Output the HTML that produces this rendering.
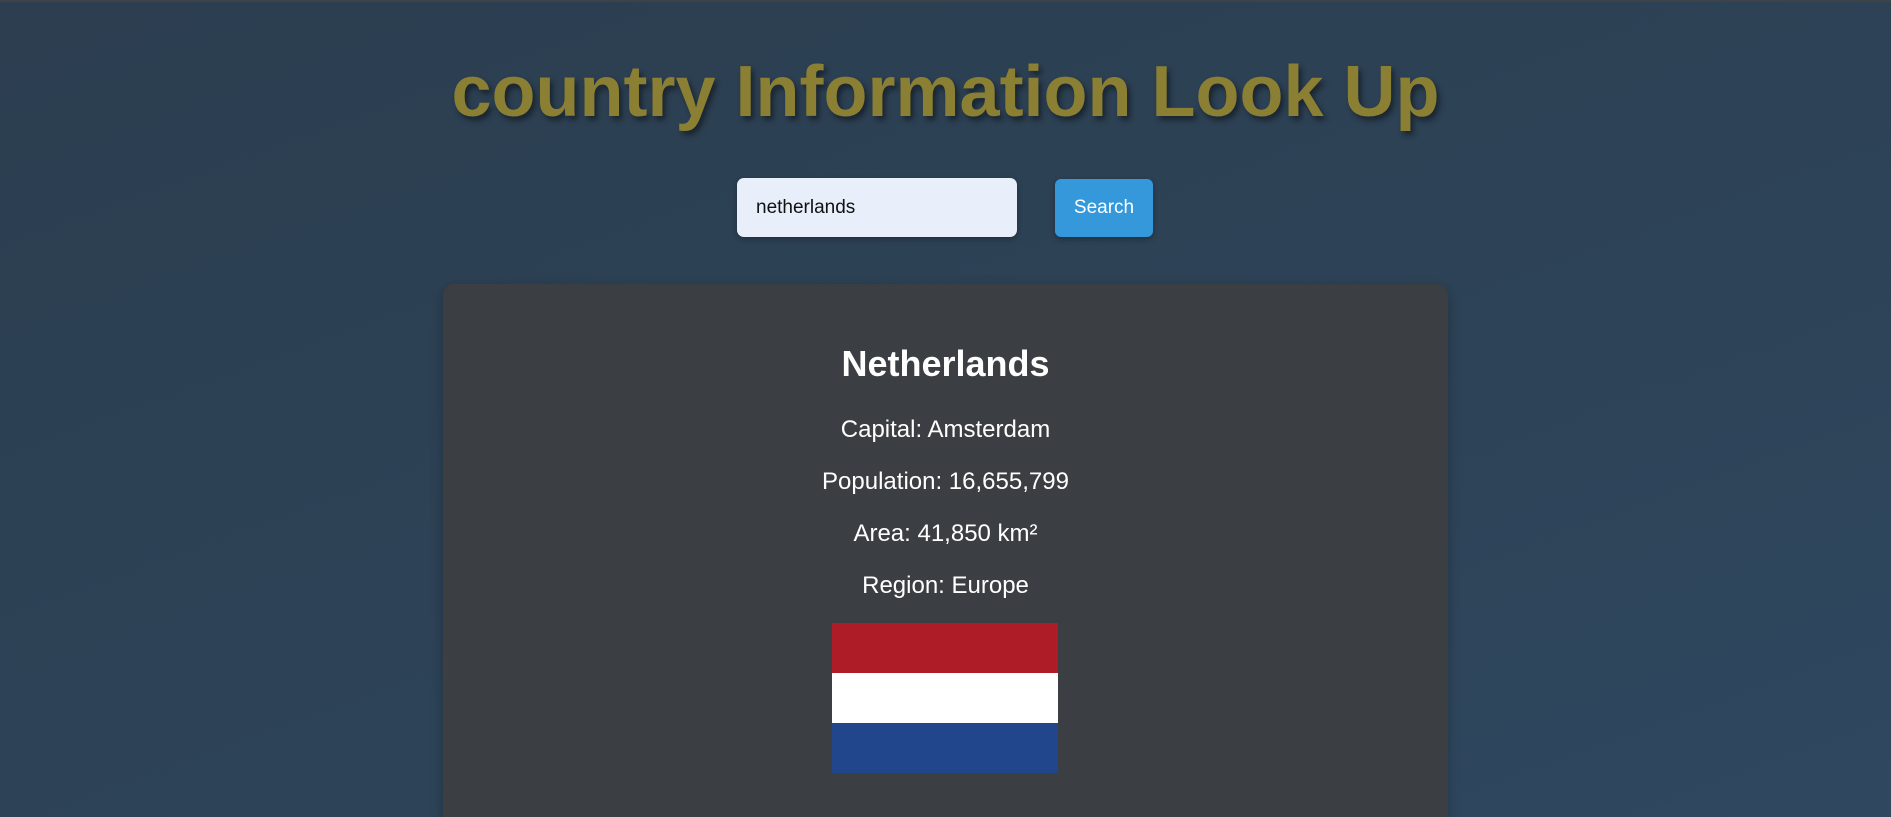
<!DOCTYPE html>
<html><head><meta charset="utf-8"><style>
html,body{margin:0;padding:0;width:1891px;height:817px;overflow:hidden;}
body{background:linear-gradient(160deg,#2c3e50 0%,#2d4357 60%,#2f4860 100%);font-family:"Liberation Sans",Arial,sans-serif;position:relative;border-top:2px solid #3f4347;box-sizing:border-box;}
h1{position:absolute;left:0;width:1891px;top:47px;margin:0;text-align:center;font-size:72px;font-weight:bold;color:#8b7f33;text-shadow:3px 4px 6px rgba(0,0,0,.45);line-height:86px;}
.inp{position:absolute;left:737px;top:176px;width:280px;height:59px;background:#e8effb;border-radius:7px;box-shadow:0 2px 6px rgba(0,0,0,.3);box-sizing:border-box;padding-left:19px;line-height:59px;font-size:19px;color:#111;}
.btn{position:absolute;left:1055px;top:177px;width:98px;height:58px;background:#3498db;border-radius:6px;color:#fff;font-size:19px;line-height:58px;text-align:center;box-shadow:0 2px 6px rgba(0,0,0,.3);}
.card{position:absolute;left:443px;top:282px;width:1005px;height:560px;background:#3b3e42;border-radius:12px;box-shadow:0 4px 12px rgba(0,0,0,.25);color:#fff;text-align:center;}
.card h2{position:absolute;left:0;width:100%;top:58px;margin:0;font-size:36px;line-height:44px;}
.card p{position:absolute;left:0;width:100%;margin:0;font-size:24px;line-height:30px;}
.flag{position:absolute;left:389px;top:339px;width:226px;height:150px;}
.flag div{height:50px;}
</style></head><body>
<h1>country Information Look Up</h1>
<div class="inp">netherlands</div>
<div class="btn">Search</div>
<div class="card">
<h2>Netherlands</h2>
<p style="top:131px">Capital: Amsterdam</p>
<p style="top:183px">Population: 16,655,799</p>
<p style="top:235px">Area: 41,850 km²</p>
<p style="top:287px">Region: Europe</p>
<div class="flag"><div style="background:#ae1c28"></div><div style="background:#fff"></div><div style="background:#21468b"></div></div>
</div>
</body></html>
